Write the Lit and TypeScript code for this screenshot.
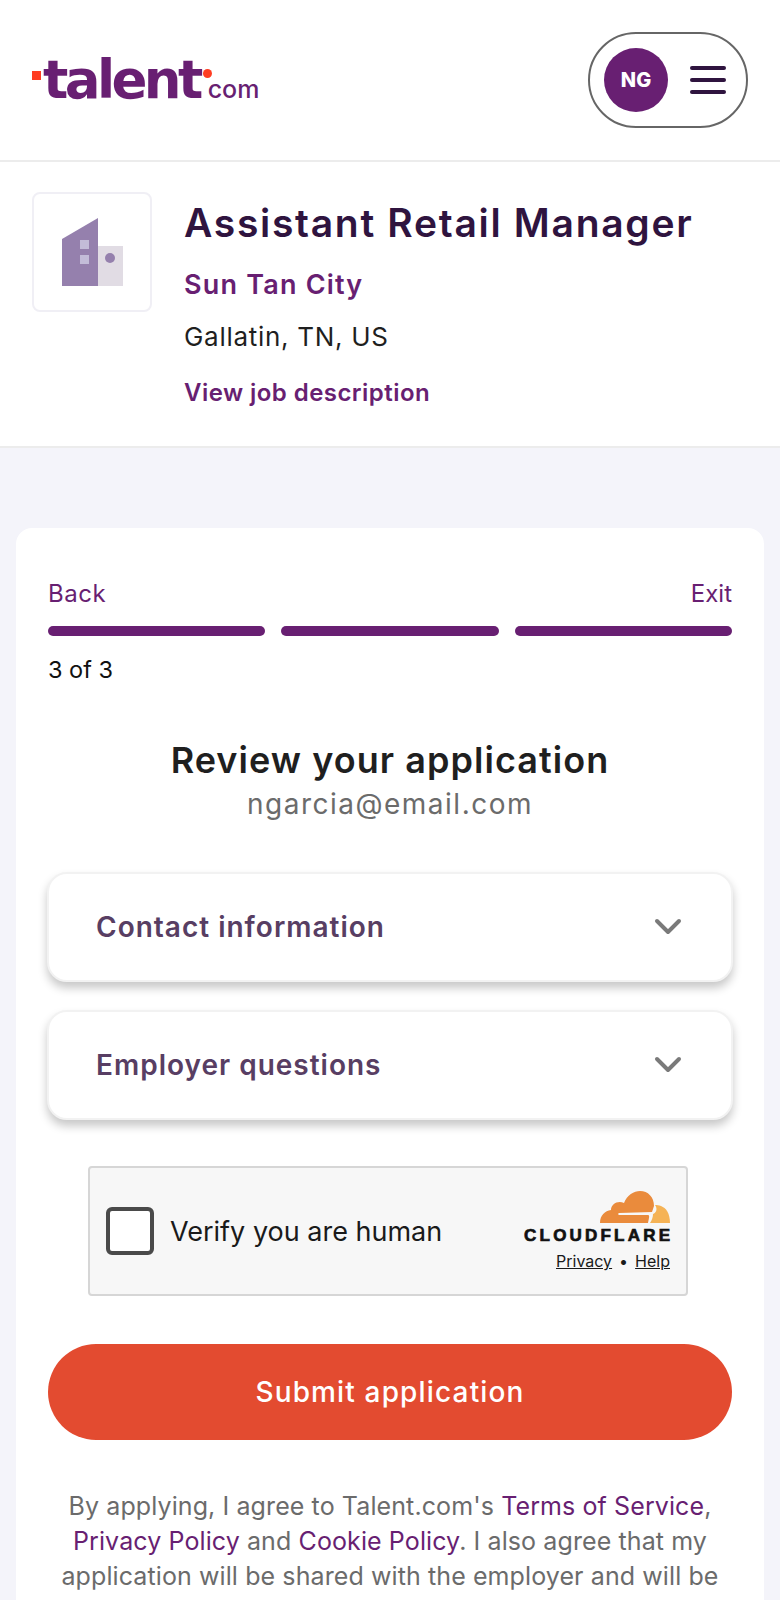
import { LitElement, html, css } from 'lit';
import { customElement } from 'lit/decorators.js';

@customElement('app-root')
export class AppRoot extends LitElement {
  static styles = css`
    :host {
      display: block;
      width: 780px;
      height: 1600px;
      overflow: hidden;
      background: #f4f4fa;
      font-family: Inter, 'Noto Sans', 'Liberation Sans', sans-serif;
      color: #1f1f1f;
    }
    a {
      color: inherit;
      text-decoration: none;
    }
    .top {
      height: 160px;
      background: #fff;
      border-bottom: 2px solid #ececec;
      display: flex;
      align-items: center;
      justify-content: space-between;
      padding: 0 32px;
    }
    .logo {
      display: flex;
      align-items: baseline;
      position: relative;
      color: #681f72;
      font-family: 'DejaVu Sans', sans-serif;
      font-weight: 700;
      font-size: 53px;
      line-height: 64px;
      padding-left: 11px;
      letter-spacing: -3.6px;
      margin-top: 8px;
    }
    .logo .sq {
      position: absolute;
      left: 0;
      top: 23px;
      width: 9px;
      height: 9px;
      background: #ff3d22;
    }
    .logo .dot {
      position: absolute;
      left: 171px;
      top: 21px;
      width: 9px;
      height: 9px;
      border-radius: 50%;
      background: #ff3d22;
    }
    .logo .com {
      font-size: 25px;
      font-weight: 500;
      font-family: Inter, sans-serif;
      margin-left: 8px;
      letter-spacing: 0;
    }
    .pill {
      width: 160px;
      height: 96px;
      box-sizing: border-box;
      border: 2px solid #666;
      border-radius: 48px;
      display: flex;
      align-items: center;
      padding-left: 14px;
      gap: 22px;
    }
    .avatar {
      width: 64px;
      height: 64px;
      border-radius: 50%;
      background: #681f72;
      color: #fff;
      font-size: 20px;
      font-weight: 800;
      display: flex;
      align-items: center;
      justify-content: center;
    }
    .burger {
      display: flex;
      flex-direction: column;
      gap: 8px;
    }
    .burger span {
      display: block;
      width: 36px;
      height: 4px;
      border-radius: 2px;
      background: #2f143f;
    }
    .job {
      height: 286px;
      box-sizing: border-box;
      background: #fff;
      border-bottom: 2px solid #ececec;
      display: flex;
      gap: 32px;
      padding: 30px 32px 0;
    }
    .company-logo {
      width: 120px;
      height: 120px;
      box-sizing: border-box;
      border: 2px solid #f0eff5;
      border-radius: 8px;
      display: flex;
      align-items: center;
      justify-content: center;
      flex: none;
    }
    .company-logo svg {
      margin-left: 2px;
    }
    .job-text {
      margin-top: 3px;
    }
    .job h1 {
      margin: 0;
      font-size: 39px;
      line-height: 56px;
      font-weight: 600;
      color: #2f143f;
      letter-spacing: 1.7px;
      white-space: nowrap;
    }
    .job .company {
      font-size: 27px;
      line-height: 40px;
      font-weight: 600;
      color: #681f72;
      letter-spacing: 1.2px;
      margin-top: 14px;
    }
    .job .location {
      font-size: 26px;
      line-height: 40px;
      letter-spacing: 0.7px;
      margin-top: 12px;
      color: #1f1f1f;
    }
    .job .desc {
      display: block;
      font-size: 24px;
      line-height: 36px;
      font-weight: 600;
      letter-spacing: 0.45px;
      color: #681f72;
      margin-top: 18px;
    }
    .card {
      margin: 80px 16px 0;
      background: #fff;
      border-radius: 16px;
      padding: 48px 32px 0;
      height: 1100px;
    }
    .nav {
      display: flex;
      justify-content: space-between;
      font-size: 24px;
      line-height: 36px;
      letter-spacing: 0.5px;
      color: #681f72;
    }
    .nav .exit {
      letter-spacing: 0;
    }
    .bars {
      display: grid;
      grid-template-columns: repeat(3, 1fr);
      gap: 16px;
      margin-top: 14px;
    }
    .bars span {
      height: 10px;
      border-radius: 5px;
      background: #681f72;
    }
    .count {
      font-size: 23.5px;
      line-height: 36px;
      margin-top: 16px;
      color: #111;
    }
    .review {
      text-align: center;
      margin-top: 45px;
    }
    .review h2 {
      margin: 0;
      font-size: 36px;
      line-height: 54px;
      font-weight: 600;
      letter-spacing: 1.05px;
      color: #1f1f1f;
    }
    .review p {
      margin: -1px 0 0;
      font-size: 28px;
      line-height: 36px;
      letter-spacing: 1.5px;
      color: #6b6b6b;
    }
    .acc {
      height: 110px;
      box-sizing: border-box;
      margin: 28px -1px 0;
      border: 2px solid #f2f2f2;
      border-radius: 20px;
      box-shadow: 0 6px 10px rgba(0, 0, 0, 0.22);
      display: flex;
      align-items: center;
      justify-content: space-between;
      padding: 0 49px 0 47px;
      font-size: 28px;
      font-weight: 600;
      letter-spacing: 1px;
      color: #583e63;
      background: #fff;
    }
    .acc.first {
      margin-top: 50px;
    }
    .turnstile {
      width: 600px;
      height: 130px;
      box-sizing: border-box;
      margin: 46px 0 0 40px;
      border: 2px solid #d6d6d6;
      border-radius: 4px;
      background: #f7f7f7;
      display: flex;
      align-items: center;
      padding: 0 16px;
    }
    .check {
      width: 48px;
      height: 48px;
      box-sizing: border-box;
      border: 4px solid #4a4a4a;
      border-radius: 6px;
      background: #fff;
      flex: none;
    }
    .verify {
      margin-left: 16px;
      font-size: 27px;
      color: #1a1a1a;
    }
    .cf {
      margin-left: auto;
      display: flex;
      flex-direction: column;
      align-items: flex-end;
    }
    .cf svg {
      display: block;
    }
    .cf .word {
      font-family: 'Liberation Sans', sans-serif;
      font-size: 17px;
      line-height: 20px;
      font-weight: 700;
      letter-spacing: 3.2px;
      color: #111;
      margin-right: -3.2px;
      -webkit-text-stroke: 0.7px #111;
      margin-top: 3px;
    }
    .cf .links {
      font-size: 16px;
      line-height: 20px;
      color: #1a1a1a;
      margin-top: 5px;
      display: flex;
      gap: 7px;
    }
    .cf .links a {
      text-decoration: underline;
    }
    .submit {
      display: block;
      width: 100%;
      height: 96px;
      margin-top: 48px;
      border: 0;
      border-radius: 48px;
      background: #e34b30;
      color: #fff;
      font-family: inherit;
      font-size: 28px;
      font-weight: 500;
      letter-spacing: 1.15px;
    }
    .legal {
      margin: 49px 0 0;
      text-align: center;
      font-size: 25px;
      line-height: 35px;
      letter-spacing: 0.1px;
      color: #6b6b6b;
      white-space: nowrap;
    }
    .legal a {
      color: #681f72;
    }
  `;

  private _chevron() {
    return html`<svg width="28" height="18" viewBox="0 0 28 18" fill="none">
      <path d="M3 3 L14 14 L25 3" stroke="#7a7a7a" stroke-width="4" stroke-linecap="round" stroke-linejoin="round" />
    </svg>`;
  }

  render() {
    return html`
      <header class="top">
        <a class="logo" href="#">
          <span class="sq"></span>talent<span class="dot"></span><span class="com">com</span>
        </a>
        <div class="pill">
          <div class="avatar">NG</div>
          <div class="burger"><span></span><span></span><span></span></div>
        </div>
      </header>

      <section class="job">
        <div class="company-logo">
          <svg width="62" height="68" viewBox="0 0 62 68">
            <path d="M0 21 L36 0 V68 H0 Z" fill="#9580ad" />
            <rect x="36" y="28" width="25" height="40" fill="#e1dce4" />
            <rect x="18" y="22" width="9" height="9" fill="#c3bcd8" />
            <rect x="18" y="37" width="9" height="9" fill="#c3bcd8" />
            <circle cx="48" cy="40" r="5" fill="#9580ad" />
          </svg>
        </div>
        <div class="job-text">
          <h1>Assistant Retail Manager</h1>
          <div class="company">Sun Tan City</div>
          <div class="location">Gallatin, TN, US</div>
          <a class="desc" href="#">View job description</a>
        </div>
      </section>

      <main class="card">
        <div class="nav"><a href="#">Back</a><a class="exit" href="#">Exit</a></div>
        <div class="bars"><span></span><span></span><span></span></div>
        <div class="count">3 of 3</div>
        <div class="review">
          <h2>Review your application</h2>
          <p>ngarcia@email.com</p>
        </div>
        <div class="acc first"><span>Contact information</span>${this._chevron()}</div>
        <div class="acc"><span>Employer questions</span>${this._chevron()}</div>
        <div class="turnstile">
          <div class="check"></div>
          <div class="verify">Verify you are human</div>
          <div class="cf">
            <svg width="70" height="32" viewBox="0 0 70 32">
              <path d="M0 32 C0 24 5 20 11 19 C11 13 18 9 24 12 C27 4 34 0 40 0 C48 0 54 6 54 15 L52 21 L19 22 C18 22 18 24 19 24 H48 C50 24 49 27 48 32 Z" fill="#ea8b3c" />
              <path d="M50 32 C52 29 53 26 53 23 C56 22 58 18 55 14 C57 14 59 14 61 15 C66 17 70 22 70 32 Z" fill="#f5b356" />
            </svg>
            <div class="word">CLOUDFLARE</div>
            <div class="links"><a href="#">Privacy</a><span>•</span><a href="#">Help</a></div>
          </div>
        </div>
        <button class="submit">Submit application</button>
        <p class="legal">
          By applying, I agree to Talent.com's <a href="#">Terms of Service</a>,<br />
          <a href="#">Privacy Policy</a> and <a href="#">Cookie Policy</a>. I also agree that my<br />
          application will be shared with the employer and will be
        </p>
      </main>
    `;
  }
}
